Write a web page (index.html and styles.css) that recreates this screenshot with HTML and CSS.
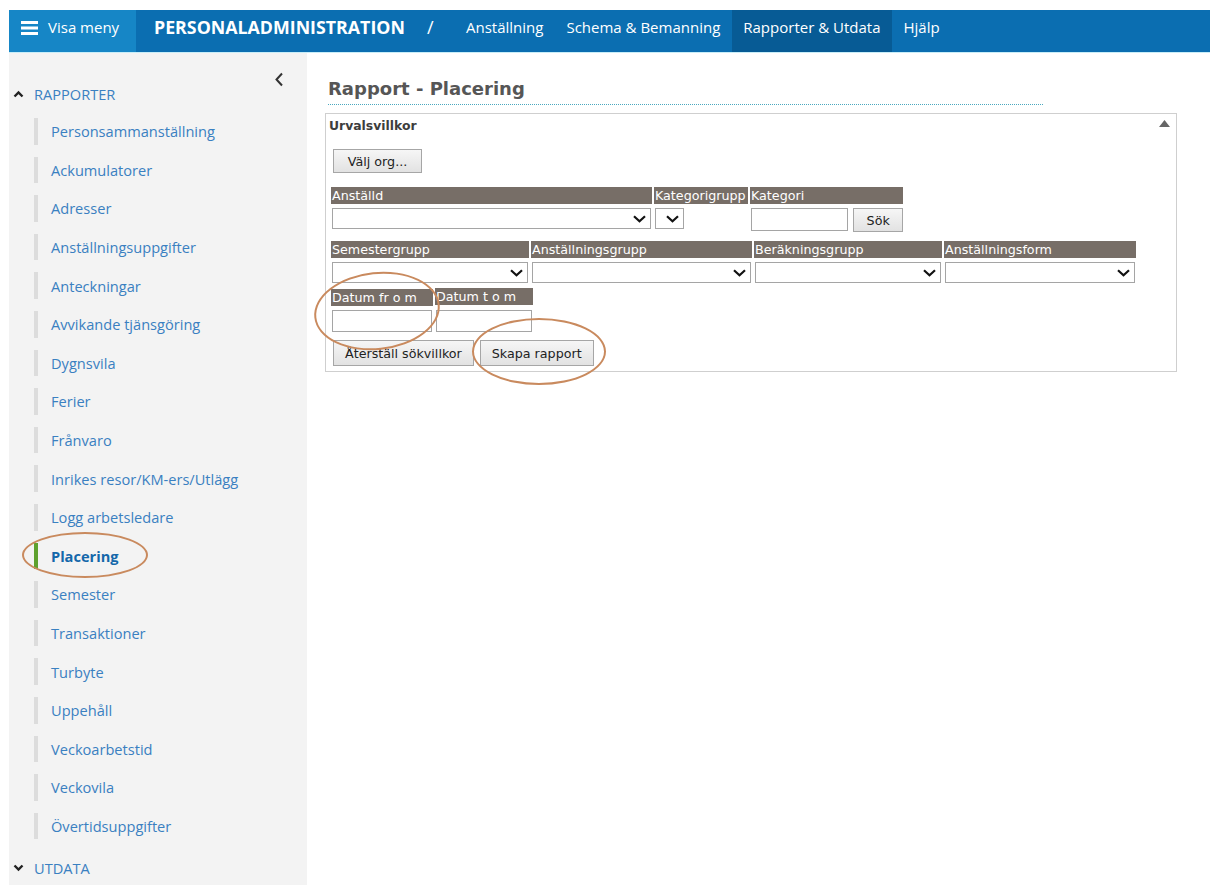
FILE: index.html
```html
<!DOCTYPE html>
<html lang="sv">
<head>
<meta charset="utf-8">
<title>Rapport - Placering</title>
<link rel="stylesheet" href="styles.css">
</head>
<body>
<div class="app">
  <header class="topbar">
    <a class="menu-toggle">
      <svg class="burger" width="17" height="14" viewBox="0 0 17 14"><rect x="0" y="0" width="17" height="3"/><rect x="0" y="5.5" width="17" height="3"/><rect x="0" y="11" width="17" height="3"/></svg>
      <span>Visa meny</span>
    </a>
    <span class="brand">PERSONALADMINISTRATION</span>
    <span class="slash">/</span>
    <nav class="mainnav">
      <a>Anställning</a>
      <a>Schema &amp; Bemanning</a>
      <a class="active">Rapporter &amp; Utdata</a>
      <a>Hjälp</a>
    </nav>
  </header>

  <div class="layout">
    <aside class="sidebar">
      <svg class="collapse" width="10" height="15" viewBox="0 0 10 15"><path d="M8 1.5 L2.5 7.5 L8 13.5" fill="none" stroke="#333" stroke-width="2"/></svg>
      <div class="group-head">
        <svg class="caret" width="11" height="8" viewBox="0 0 11 8"><path d="M1.5 6.5 L5.5 2.5 L9.5 6.5" fill="none" stroke="#222" stroke-width="2.4"/></svg>
        <span>RAPPORTER</span>
      </div>
      <ul class="items">
        <li>Personsammanställning</li>
        <li>Ackumulatorer</li>
        <li>Adresser</li>
        <li>Anställningsuppgifter</li>
        <li>Anteckningar</li>
        <li>Avvikande tjänsgöring</li>
        <li>Dygnsvila</li>
        <li>Ferier</li>
        <li>Frånvaro</li>
        <li>Inrikes resor/KM-ers/Utlägg</li>
        <li>Logg arbetsledare</li>
        <li class="current">Placering</li>
        <li>Semester</li>
        <li>Transaktioner</li>
        <li>Turbyte</li>
        <li>Uppehåll</li>
        <li>Veckoarbetstid</li>
        <li>Veckovila</li>
        <li>Övertidsuppgifter</li>
      </ul>
      <div class="group-head closed">
        <svg class="caret" width="11" height="8" viewBox="0 0 11 8"><path d="M1.5 1.5 L5.5 5.5 L9.5 1.5" fill="none" stroke="#222" stroke-width="2.4"/></svg>
        <span>UTDATA</span>
      </div>
    </aside>

    <main class="content">
      <h1 class="page-title">Rapport - Placering</h1>
      <section class="panel">
        <div class="panel-head">
          <span>Urvalsvillkor</span>
          <svg class="panel-toggle" width="11" height="7" viewBox="0 0 11 7"><path d="M0 7 L5.5 0 L11 7 Z" fill="#666"/></svg>
        </div>
        <button class="btn org">Välj org...</button>

        <div class="row r1">
          <div class="field w-anst">
            <div class="lbl">Anställd</div>
            <div class="sel"><svg width="13" height="8" viewBox="0 0 13 8"><path d="M1 1.2 L6.5 6.2 L12 1.2" fill="none" stroke="#111" stroke-width="2.2"/></svg></div>
          </div>
          <div class="field w-katg">
            <div class="lbl">Kategorigrupp</div>
            <div class="sel small"><svg width="13" height="8" viewBox="0 0 13 8"><path d="M1 1.2 L6.5 6.2 L12 1.2" fill="none" stroke="#111" stroke-width="2.2"/></svg></div>
          </div>
          <div class="field w-kat">
            <div class="lbl">Kategori</div>
            <div class="inline">
              <div class="txt kat"></div>
              <button class="btn sok">Sök</button>
            </div>
          </div>
        </div>

        <div class="row r2">
          <div class="field w-sem">
            <div class="lbl">Semestergrupp</div>
            <div class="sel"><svg width="13" height="8" viewBox="0 0 13 8"><path d="M1 1.2 L6.5 6.2 L12 1.2" fill="none" stroke="#111" stroke-width="2.2"/></svg></div>
          </div>
          <div class="field w-ansg">
            <div class="lbl">Anställningsgrupp</div>
            <div class="sel"><svg width="13" height="8" viewBox="0 0 13 8"><path d="M1 1.2 L6.5 6.2 L12 1.2" fill="none" stroke="#111" stroke-width="2.2"/></svg></div>
          </div>
          <div class="field w-ber">
            <div class="lbl">Beräkningsgrupp</div>
            <div class="sel"><svg width="13" height="8" viewBox="0 0 13 8"><path d="M1 1.2 L6.5 6.2 L12 1.2" fill="none" stroke="#111" stroke-width="2.2"/></svg></div>
          </div>
          <div class="field w-form">
            <div class="lbl">Anställningsform</div>
            <div class="sel"><svg width="13" height="8" viewBox="0 0 13 8"><path d="M1 1.2 L6.5 6.2 L12 1.2" fill="none" stroke="#111" stroke-width="2.2"/></svg></div>
          </div>
        </div>

        <div class="row r3">
          <div class="field w-from">
            <div class="lbl">Datum fr o m</div>
            <div class="txt"></div>
          </div>
          <div class="field w-tom">
            <div class="lbl">Datum t o m</div>
            <div class="txt"></div>
          </div>
        </div>

        <div class="actions">
          <button class="btn">Återställ sökvillkor</button>
          <button class="btn">Skapa rapport</button>
        </div>
      </section>
    </main>
  </div>

  <!-- hand-drawn markers circling the relevant controls -->
  <div class="mark m-placering"></div>
  <div class="mark m-datum"></div>
  <div class="mark m-skapa"></div>
</div>
</body>
</html>
```

FILE: styles.css
```css
* { box-sizing: border-box; }

html, body {
  margin: 0;
  height: 100%;
  background: #fff;
}

body {
  font-family: "Open Sans", "Noto Sans", sans-serif;
  overflow: hidden;
}

.app {
  position: relative;
  padding: 10px 0 0 9px;
  height: 885px;
  display: flex;
  flex-direction: column;
}

/* ---------- top bar ---------- */
.topbar {
  height: 43px;
  background: #0b6eb1;
  display: flex;
  align-items: stretch;
  color: #fff;
  border-bottom: 1px solid #c9eef8;
  flex: none;
}

.menu-toggle,
.brand,
.slash,
.mainnav a {
  display: flex;
  align-items: center;
  padding-bottom: 8px;
}

.menu-toggle {
  width: 127px;
  background: #1686c6;
  padding-left: 12px;
  gap: 10px;
  font-size: 15px;
}
.burger { fill: #fff; margin-top: 1px; }

.brand {
  margin-left: 18px;
  font-weight: 700;
  font-size: 17.8px;
}

.slash {
  margin-left: 22px;
  font-size: 18px;
}

.mainnav {
  display: flex;
  margin-left: 21px;
}
.mainnav a {
  padding-left: 11.5px;
  padding-right: 11.5px;
  font-size: 15px;
}
.mainnav a.active { background: #075b95; }

/* ---------- layout ---------- */
.layout {
  flex: 1;
  display: flex;
  min-height: 0;
}

.sidebar {
  position: relative;
  width: 298px;
  flex: none;
  background: #f3f3f3;
  padding-top: 30px;
}

.collapse {
  position: absolute;
  top: 19px;
  left: 265px;
}

.group-head {
  display: flex;
  align-items: center;
  height: 22px;
  padding-left: 4px;
  color: #3a80c1;
  font-size: 14.6px;
  gap: 10px;
}
.group-head.closed { margin-top: 12px; }

.items {
  list-style: none;
  margin: 7px 0 0;
  padding: 0 0 0 25px;
}
.items li {
  height: 38.6px;
  display: flex;
  align-items: center;
  padding-left: 17px;
  font-size: 14.6px;
  color: #3a80c1;
  position: relative;
}
.items li::before {
  content: "";
  position: absolute;
  left: 0;
  top: 6px;
  bottom: 6px;
  width: 4px;
  background: #dcdcdc;
}
.items li.current {
  font-weight: 700;
  color: #1467aa;
}
.items li.current::before { background: #5ea12e; }

/* ---------- content ---------- */
.content {
  flex: 1;
  padding: 25px 0 0 18px;
}

.page-title {
  margin: 0 0 0 3px;
  width: 715px;
  font-family: "DejaVu Sans", Verdana, sans-serif;
  font-size: 18px;
  font-weight: 700;
  color: #565656;
  padding-bottom: 5px;
  border-bottom: 1px dotted #4aa8bf;
  line-height: 21px;
}

.panel {
  margin-top: 8px;
  width: 852px;
  border: 1px solid #cfcfcf;
  padding: 4px 0 5px 5px;
  font-family: "DejaVu Sans", Verdana, sans-serif;
  color: #333;
}

.panel-head {
  display: flex;
  justify-content: space-between;
  align-items: flex-start;
  margin-left: -2px;
  font-weight: 700;
  font-size: 12.4px;
  color: #3d3d3d;
  padding-right: 6px;
  height: 17px;
}
.panel-toggle { margin-top: 2px; }

.btn {
  font-family: "DejaVu Sans", Verdana, sans-serif;
  font-size: 12.7px;
  color: #222;
  background: linear-gradient(#f6f6f6, #e2e2e2);
  border: 1px solid #a6a6a6;
  border-radius: 0;
  padding: 0 11px;
  height: 25px;
  cursor: default;
}
.btn.org {
  margin: 14px 0 0 2px;
  width: 89px;
  height: 24px;
  padding: 0;
}

.row {
  display: flex;
  gap: 2px;
}
.r1 { margin-top: 14px; }
.r2 { margin-top: 9px; }
.r3 { margin-top: 6px; }

.field { display: flex; flex-direction: column; }

.lbl {
  height: 17px;
  background: #776e67;
  color: #fff;
  font-size: 12.7px;
  line-height: 17px;
  padding-left: 1px;
  white-space: nowrap;
  overflow: hidden;
}

.sel {
  margin: 4px 1px 0;
  height: 21px;
  border: 1px solid #a5a5a5;
  background: #fff;
  display: flex;
  align-items: center;
  justify-content: flex-end;
  padding-right: 4px;
}
.sel.small { width: 29px; }

.txt {
  margin: 4px 1px 0;
  height: 22px;
  border: 1px solid #a5a5a5;
  background: #fff;
}

.inline { display: flex; align-items: flex-start; gap: 4px; }
.txt.kat { width: 98px; height: 23px; }
.btn.sok { width: 50px; height: 24px; margin-top: 4px; padding: 0; }

.w-anst { width: 321px; }
.w-katg { width: 94px; }
.w-kat  { width: 153px; }
.w-sem  { width: 198px; }
.w-ansg { width: 221px; }
.w-ber  { width: 188px; }
.w-form { width: 192px; }
.w-from { width: 102px; }
.w-tom  { width: 98px; }
.w-tom .lbl { margin-top: -1px; }
.w-tom .txt { margin-top: 5px; }

.actions {
  margin-top: 8px;
  display: flex;
  gap: 6px;
  padding-left: 2px;
}
.actions .btn { height: 26px; }

/* ---------- markers ---------- */
.mark {
  position: absolute;
  border: 2px solid #c98a5e;
  border-radius: 50%;
  pointer-events: none;
}
.m-placering { left: 22px; top: 532px; width: 126px; height: 46px; }
.m-datum { left: 314px; top: 272px; width: 126px; height: 78px; transform: rotate(-6deg); }
.m-skapa { left: 472px; top: 318px; width: 134px; height: 67px; }
```
